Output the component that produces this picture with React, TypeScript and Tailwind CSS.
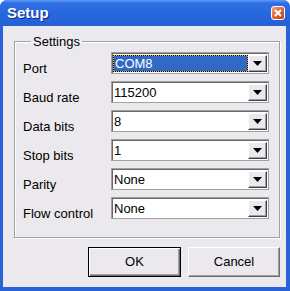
const rows = [
  { label: "Port", value: "COM8", selected: true },
  { label: "Baud rate", value: "115200" },
  { label: "Data bits", value: "8" },
  { label: "Stop bits", value: "1" },
  { label: "Parity", value: "None" },
  { label: "Flow control", value: "None" },
];

function Combo({ value, selected }: { value: string; selected?: boolean }) {
  return (
    <div className="flex h-[22px] w-[158px] border border-[#a0a0a0] bg-white shadow-[inset_1px_1px_0_#696969]">
      <div className="flex flex-1 items-center pl-[1px] pt-[1px]">
        {selected ? (
          <div className="h-[17px] w-full border border-dotted border-black bg-[#e0c060]">
            <div className="flex h-full items-center bg-[#316ac5] pl-[1px] text-white">{value}</div>
          </div>
        ) : (
          <span className="pl-[1px]">{value}</span>
        )}
      </div>
      <div className="m-[1px] ml-0 mt-[2px] flex w-[19px] items-center justify-center border border-t-white border-l-white border-b-[#404040] border-r-[#404040] bg-[#ebe9ed] shadow-[inset_-1px_-1px_0_#a0a0a0]">
        <svg width="9" height="5" viewBox="0 0 9 5">
          <path d="M0 0h9L4.5 5z" fill="#000" />
        </svg>
      </div>
    </div>
  );
}

export default function App() {
  return (
    <div className="flex h-[291px] w-[290px] flex-col rounded-t-[7px] bg-[#2a63d8] font-['Liberation_Sans',Arial,sans-serif] text-[13px] text-black">
      {/* title bar */}
      <div className="flex h-[26px] items-center justify-between rounded-t-[7px] bg-[linear-gradient(#5c9cf8_0%,#2f6fe2_12%,#2767dd_55%,#2360d6_100%)] pl-[7px] pr-[5px]">
        <span className="text-[15px] font-bold text-white [text-shadow:1px_1px_0_#0b2a80]">Setup</span>
        <div className="flex h-[14px] w-[14px] items-center justify-center rounded-[3px] border border-white bg-[linear-gradient(135deg,#f0a080,#d85830_60%,#c04020)]">
          <svg width="8" height="8" viewBox="0 0 8 8">
            <path d="M1 1L7 7M7 1L1 7" stroke="#fff" strokeWidth="2" />
          </svg>
        </div>
      </div>

      {/* client */}
      <div className="mb-[4px] ml-[3px] mr-[4px] flex flex-1 flex-col bg-[#ebe9ed]">
        <fieldset className="ml-[11px] mt-[8px] w-[266px] border border-[#a0a0a0] pb-[18px] pl-[8px] pr-[10px] pt-[3px] shadow-[inset_1px_1px_0_#fff,1px_1px_0_#fff]">
          <legend className="ml-[8px] px-[2px] leading-[15px]">Settings</legend>
          <div className="flex flex-col gap-[7px]">
            {rows.map((r) => (
              <div key={r.label} className="flex h-[22px] items-start">
                <span className="mt-[9px] w-[88px] leading-[15px]">{r.label}</span>
                <Combo value={r.value} selected={r.selected} />
              </div>
            ))}
          </div>
        </fieldset>

        <div className="mr-[6px] mt-[9px] flex justify-end gap-[7px]">
          <button className="h-[30px] w-[93px] border border-black bg-[#ebe9ed] shadow-[inset_1px_1px_0_#fff,inset_-1px_-1px_0_#716f64,inset_-2px_-2px_0_#a0a0a0]">
            OK
          </button>
          <button className="h-[30px] w-[92px] border border-b-[#716f64] border-l-white border-r-[#716f64] border-t-white bg-[#ebe9ed] shadow-[inset_-1px_-1px_0_#a0a0a0]">
            Cancel
          </button>
        </div>
      </div>
    </div>
  );
}
